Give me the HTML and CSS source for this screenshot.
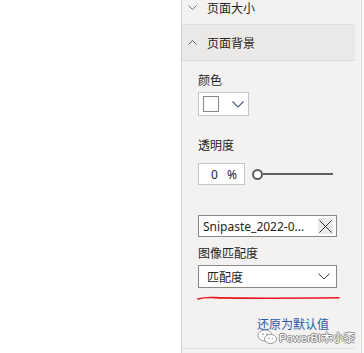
FILE: index.html
```html
<!DOCTYPE html>
<html lang="zh-CN">
<head>
  <meta charset="UTF-8">
  <meta name="viewport" content="width=device-width, initial-scale=1.0">
  <title>页面背景</title>
  <link rel="stylesheet" href="styles.css">
</head>
<body>
  <div class="app">
    <!-- 报表画布 -->
    <div class="canvas"></div>

    <!-- 格式窗格 -->
    <div class="pane">
      <div class="pane-content">
        <div class="section-head first">
          <svg class="chev" width="9" height="5" viewBox="0 0 9 5"><path d="M0.5 0.5 L4.5 4.5 L8.5 0.5" fill="none" stroke="#5f7891" stroke-width="1"/></svg>
          <span>页面大小</span>
        </div>
        <div class="section-head open">
          <svg class="chev" width="9" height="5" viewBox="0 0 9 5"><path d="M0.5 4.5 L4.5 0.5 L8.5 4.5" fill="none" stroke="#605e5c" stroke-width="1"/></svg>
          <span>页面背景</span>
        </div>

        <div class="section-body">
          <div class="field-label">颜色</div>
          <div class="color-picker">
            <span class="swatch"></span>
            <svg width="12" height="7" viewBox="0 0 12 7"><path d="M0.5 0.5 L6 6 L11.5 0.5" fill="none" stroke="#4a5a7a" stroke-width="1.1"/></svg>
          </div>

          <div class="field-label gap-lg">透明度</div>
          <div class="slider-row">
            <div class="num-input"><span>0</span><span>%</span></div>
            <div class="slider">
              <span class="thumb"></span>
              <span class="track"></span>
            </div>
          </div>

          <div class="file-box">
            <span class="file-name">Snipaste_2022-0...</span>
            <span class="clear">
              <svg width="13" height="13" viewBox="0 0 13 13"><path d="M0.5 0.5 L12.5 12.5 M12.5 0.5 L0.5 12.5" stroke="#323130" stroke-width="1"/></svg>
            </span>
          </div>

          <div class="field-label gap-sm">图像匹配度</div>
          <div class="select">
            <span>匹配度</span>
            <svg width="12" height="7" viewBox="0 0 12 7"><path d="M0.5 0.5 L6 6 L11.5 0.5" fill="none" stroke="#323130" stroke-width="1"/></svg>
          </div>

          <!-- 红色标注线 -->
          <svg class="scribble" width="144" height="8" viewBox="0 0 144 8">
            <path d="M1 5 C 6 3.5, 10 3.2, 18 3.6 C 50 4.6, 100 4.2, 142 3.8" fill="none" stroke="#e8141e" stroke-width="1.6" stroke-linecap="round"/>
          </svg>

          <div class="reset-row"><a href="#">还原为默认值</a></div>
        </div>
      </div>
      <div class="gutter"></div>
      <div class="gutter-line"></div>
      <div class="gutter-edge"></div>
    </div>

    <!-- 水印 -->
    <div class="watermark">
      <svg width="21" height="16" viewBox="0 0 21 16">
        <ellipse cx="8" cy="6.5" rx="7" ry="5.5" fill="#fff" stroke="#9a9a9a" stroke-width="1"/>
        <ellipse cx="13.5" cy="10" rx="6" ry="4.6" fill="#fff" stroke="#9a9a9a" stroke-width="1"/>
        <circle cx="6" cy="5.2" r="0.9" fill="#9a9a9a"/>
        <circle cx="10" cy="5.2" r="0.9" fill="#9a9a9a"/>
        <circle cx="12" cy="9.4" r="0.7" fill="#9a9a9a"/>
        <circle cx="15.5" cy="9.4" r="0.7" fill="#9a9a9a"/>
      </svg>
      <span>PowerBI木小桼</span>
    </div>
  </div>
</body>
</html>
```

FILE: styles.css
```css
/* Base */
* {
  margin: 0;
  padding: 0;
  box-sizing: border-box;
}

body {
  font-family: "Noto Sans", "Noto Sans CJK SC", sans-serif;
  font-size: 12px;
  color: #252423;
  background: #ffffff;
  overflow: hidden;
}

.app {
  position: relative;
  display: flex;
  height: 353px;
  overflow: hidden;
}

/* Report canvas */
.canvas {
  width: 181px;
  background: #ffffff;
}

/* Format pane */
.pane {
  flex: 1;
  display: flex;
  background: #f3f2f1;
  border-left: 1px solid #d2d0ce;
}

.pane-content {
  width: 173px;
}

.gutter {
  width: 6px;
}

.gutter-line {
  width: 1px;
  background: #e1dfdd;
}

.gutter-edge {
  flex: 1;
  background: #f8f7f6;
}

/* Section headers */
.section-head {
  display: flex;
  align-items: center;
  height: 36px;
  padding-left: 6px;
  border-bottom: 1px solid #e1dfdd;
  font-family: "Noto Sans CJK SC", sans-serif;
  font-size: 12px;
  line-height: 16px;
}

.section-head.first {
  height: 34px;
  margin-top: -9px;
}

.section-head.open {
  background: #eae9e8;
  border-bottom-color: #dcdad8;
}

.section-head .chev {
  margin-right: 10px;
}

/* Section body */
.section-body {
  height: 288px;
  padding: 11px 0 0 16px;
  border-bottom: 1px solid #e1dfdd;
}

.field-label {
  font-family: "Noto Sans CJK SC", sans-serif;
  line-height: 16px;
  margin-bottom: 4px;
}

.field-label.gap-lg {
  margin-top: 21px;
  margin-bottom: 10px;
}

.field-label.gap-sm {
  margin-top: 8px;
}

/* Color picker */
.color-picker {
  display: flex;
  align-items: center;
  width: 51px;
  height: 24px;
  padding-left: 4px;
  background: #ffffff;
  border: 1px solid #c8c6c4;
}

.color-picker .swatch {
  width: 16px;
  height: 16px;
  border: 1px solid #8a8886;
  background: #ffffff;
  margin-right: 13px;
}

/* Transparency */
.slider-row {
  display: flex;
  align-items: center;
}

.num-input {
  display: flex;
  justify-content: space-between;
  width: 47px;
  height: 22px;
  padding: 0 7px 0 12px;
  align-items: center;
  background: #ffffff;
  border: 1px solid #c8c6c4;
}

.slider {
  display: flex;
  align-items: center;
  margin-left: 7px;
}

.slider .thumb {
  width: 11px;
  height: 11px;
  border: 2px solid #605e5c;
  border-radius: 50%;
  background: #ffffff;
}

.slider .track {
  width: 70px;
  height: 2px;
  background: #605e5c;
}

/* Image file */
.file-box {
  display: flex;
  align-items: center;
  justify-content: space-between;
  width: 139px;
  height: 22px;
  margin-top: 30px;
  padding: 0 3px 0 4px;
  background: #ffffff;
  border: 1px solid #8a8886;
}

.file-name {
  font-family: "Noto Sans", sans-serif;
  font-size: 12px;
}

.clear {
  display: flex;
  align-items: center;
  justify-content: center;
  width: 15px;
  height: 16px;
  background: #edebe9;
}

/* Image fit dropdown */
.select {
  display: flex;
  align-items: center;
  justify-content: space-between;
  width: 139px;
  height: 23px;
  padding: 0 6px 0 8px;
  background: #ffffff;
  border: 1px solid #8a8886;
  font-family: "Noto Sans CJK SC", sans-serif;
}

.scribble {
  display: block;
  margin-top: 6px;
  margin-left: -1px;
}

.reset-row {
  display: flex;
  justify-content: flex-end;
  width: 139px;
  padding-right: 8px;
  margin-top: 14px;
  line-height: 16px;
}

.reset-row a {
  color: #2b5aa5;
  text-decoration: none;
  font-family: "Noto Sans CJK SC", sans-serif;
}

/* Watermark overlay */
.watermark {
  position: absolute;
  left: 257px;
  top: 327px;
  display: flex;
  align-items: center;
  gap: 1px;
  font-family: "Liberation Sans", "Noto Sans CJK SC", sans-serif;
  font-size: 11.5px;
  line-height: 16px;
  letter-spacing: -0.2px;
  color: #ffffff;
  text-shadow: -1px 0 #8a8a8a, 1px 0 #8a8a8a, 0 -1px #8a8a8a, 0 1px #8a8a8a;
}

.watermark span {
  margin-top: 3px;
}
```
